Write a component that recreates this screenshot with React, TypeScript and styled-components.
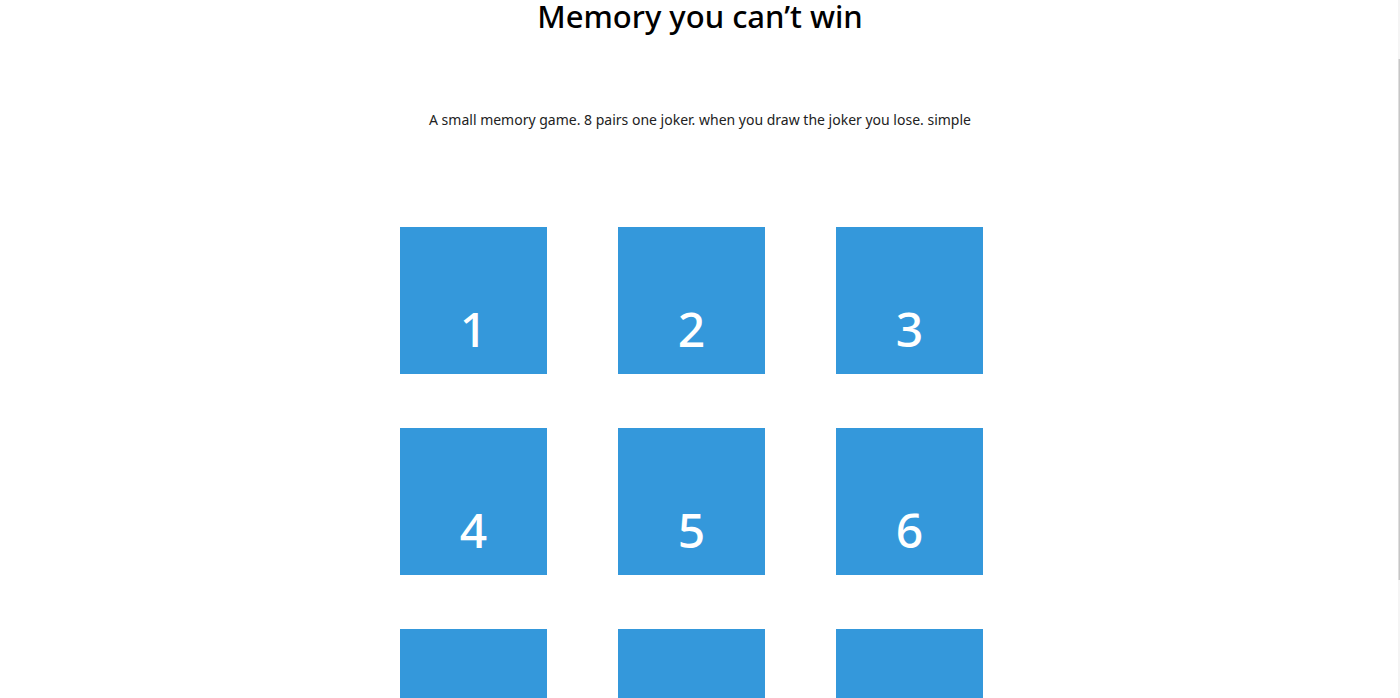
import React, { useState } from "react";
import styled, { createGlobalStyle } from "styled-components";

const GlobalStyle = createGlobalStyle`
  * { box-sizing: border-box; }
  body {
    margin: 0;
    background: #fff;
    color: #222;
    font-family: "Noto Sans", "Open Sans", sans-serif;
  }
`;

const Page = styled.div`
  height: 100vh;
  overflow: hidden;
`;

const Content = styled.main`
  max-width: 600px;
  margin: 0 auto;
`;

const Title = styled.h1`
  margin: 0;
  color: #000;
  font-size: 31px;
  font-weight: 500;
  line-height: 32px;
  text-align: center;
`;

const Intro = styled.p`
  margin: 76px 0 95px;
  font-size: 14px;
  line-height: 24px;
  text-align: center;
`;

const Board = styled.div`
  display: grid;
  grid-template-columns: repeat(auto-fill, 147px);
  gap: 54px 71px;
`;

const Card = styled.button`
  height: 147px;
  padding: 56px 0 0;
  border: 0;
  background: #3498db;
  color: #fff;
  font-family: inherit;
  font-size: 48px;
  font-weight: 500;
  line-height: 48px;
  cursor: pointer;
`;

const ScrollRail = styled.div`
  position: fixed;
  top: 0;
  right: 0;
  bottom: 0;
  display: grid;
  grid-template-rows: 59fr 521fr 118fr;
  width: 2px;
  background: #f4f4f4;
`;

const ScrollThumb = styled.div`
  grid-row: 2;
  border-left: 1px solid #dedede;
  background: #c6c6c6;
`;

const numbers = [1, 2, 3, 4, 5, 6, 7, 8, 9];

export default function App() {
  const [selected, setSelected] = useState<number | null>(null);
  return (
    <Page>
      <GlobalStyle />
      <Content>
        <Title>Memory you can’t win</Title>
        <Intro>
          A small memory game. 8 pairs one joker. when you draw the joker you lose. simple
        </Intro>
        <Board>
          {numbers.map((n) => (
            <Card
              key={n}
              type="button"
              aria-pressed={selected === n}
              onClick={() => setSelected(n)}
            >
              {n}
            </Card>
          ))}
        </Board>
      </Content>
      <ScrollRail aria-hidden="true">
        <ScrollThumb />
      </ScrollRail>
    </Page>
  );
}
